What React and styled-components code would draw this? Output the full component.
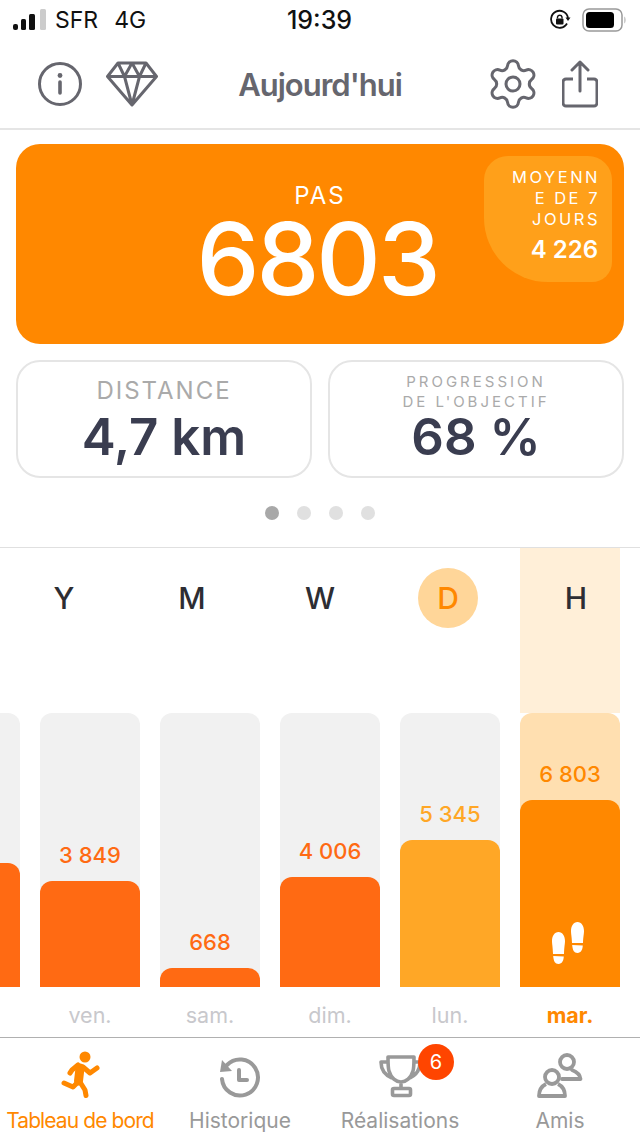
import React from 'react'
import styled, { createGlobalStyle } from 'styled-components'
import { Settings } from 'lucide-react'

const bars = [
  { day: 'ven.', value: '3 849', height: 106, color: '#ff6a13' },
  { day: 'sam.', value: '668', height: 19, color: '#ff6a13' },
  { day: 'dim.', value: '4 006', height: 110, color: '#ff6a13' },
  { day: 'lun.', value: '5 345', height: 147, color: '#ffa726' },
  { day: 'mar.', value: '6 803', height: 187, color: '#ff8800', today: true },
]

export default function App() {
  return (
    <>
      <GlobalStyle />
      <Page>
        <StatusBar>
          <StatusGroup>
            <svg width="34" height="22" viewBox="0 0 34 22">
              <rect x="0" y="15" width="5" height="6" rx="2" fill="#111" />
              <rect x="8" y="10" width="5" height="11" rx="1.5" fill="#111" />
              <rect x="16" y="5" width="6" height="16" rx="1.5" fill="#111" />
              <rect x="27" y="0" width="6" height="21" rx="1.5" fill="#ccc" />
            </svg>
            <Carrier>SFR</Carrier>
            <Carrier>4G</Carrier>
          </StatusGroup>
          <Clock>19:39</Clock>
          <StatusRight>
            <svg width="22" height="22" viewBox="0 0 22 22">
              <path d="M18 14.5A8.5 8.5 0 1 1 19 9" fill="none" stroke="#111" strokeWidth="1.8" />
              <path d="M16.5 8.5h5L19 12z" fill="#111" />
              <rect x="7" y="9.5" width="7.5" height="6" rx="1" fill="#111" />
              <path d="M8.5 9.5V8a2.3 2.3 0 0 1 4.5 0v1.5" fill="none" stroke="#111" strokeWidth="1.4" />
            </svg>
            <svg width="44" height="24" viewBox="0 0 44 24">
              <rect x="1" y="1" width="39" height="22" rx="6" fill="none" stroke="#999" strokeWidth="1.5" />
              <rect x="4" y="4" width="28" height="16" rx="3.5" fill="#000" />
              <path d="M42.5 8.5c1.2.6 1.2 6.4 0 7z" fill="#999" />
            </svg>
          </StatusRight>
        </StatusBar>

        <NavBar>
          <NavSide>
            <svg width="44" height="44" viewBox="0 0 44 44">
              <circle cx="22" cy="22" r="20.5" fill="none" stroke="#66666e" strokeWidth="3" />
              <circle cx="22" cy="13.5" r="2.4" fill="#66666e" />
              <path d="M22 20v11" stroke="#66666e" strokeWidth="3.6" strokeLinecap="round" />
            </svg>
            <svg width="52" height="46" viewBox="0 0 52 46">
              <path
                d="M12 2h28l10.5 13.5L26 44 1.5 15.5zM1.5 15.5h49M12 2l6.5 13.5L26 2l7.5 13.5L40 2M18.5 15.5 26 44l7.5-28.5"
                fill="none"
                stroke="#66666e"
                strokeWidth="3"
                strokeLinejoin="round"
              />
            </svg>
          </NavSide>
          <Title>Aujourd'hui</Title>
          <NavActions>
            <Settings size={56} color="#66666e" strokeWidth={1.3} />
            <svg width="36" height="48" viewBox="0 0 36 48">
              <path
                d="M11 19H4a3 3 0 0 0-3 3v21a3 3 0 0 0 3 3h28a3 3 0 0 0 3-3V22a3 3 0 0 0-3-3h-7"
                fill="none"
                stroke="#66666e"
                strokeWidth="3"
              />
              <path
                d="M18 31V2M10 10l8-8 8 8"
                fill="none"
                stroke="#66666e"
                strokeWidth="3"
                strokeLinecap="round"
                strokeLinejoin="round"
              />
            </svg>
          </NavActions>
        </NavBar>

        <Summary>
          <StepsCard>
            <StepsLabel>PAS</StepsLabel>
            <StepsValue>6803</StepsValue>
            <AverageBadge>
              <AverageLabel>
                MOYENN
                <br />E DE 7
                <br />
                JOURS
              </AverageLabel>
              <AverageValue>4 226</AverageValue>
            </AverageBadge>
          </StepsCard>
          <StatRow>
            <StatCard>
              <StatLabel>DISTANCE</StatLabel>
              <StatValue $gap={10}>4,7 km</StatValue>
            </StatCard>
            <StatCard $dense>
              <StatLabelSmall>
                PROGRESSION
                <br />
                DE L'OBJECTIF
              </StatLabelSmall>
              <StatValue $gap={2}>68 %</StatValue>
            </StatCard>
          </StatRow>
          <Dots>
            <Dot $active />
            <Dot />
            <Dot />
            <Dot />
          </Dots>
        </Summary>

        <RangeRow>
          {['Y', 'M', 'W', 'D', 'H'].map((letter) => (
            <RangeItem key={letter} $selected={letter === 'D'}>
              {letter}
            </RangeItem>
          ))}
        </RangeRow>

        <Chart>
          <Column>
            <Track>
              <Fill $color="#ff6a13" $height={124} />
            </Track>
          </Column>
          {bars.map((bar) => (
            <Column key={bar.day}>
              <Track $today={bar.today}>
                <BarValue $color={bar.color}>{bar.value}</BarValue>
                <Fill $color={bar.color} $height={bar.height}>
                  {bar.today && (
                    <Steps width="32" height="42" viewBox="0 0 32 42">
                      <path d="M6.5 10C10.5 10 13 14 13 19c0 3-.8 5.5-1 13H1c-.2-7.5-1-10-1-13 0-5 2.500-9 6.500-9z" fill="#fff" />
                      <path d="M1.200 34l10.600.6C11.500 39 10 42 6.500 42 3 42 1.500 39 1.200 34z" fill="#fff" />
                      <path d="M25.500 0C29.500 0 32 4 32 9c0 3-.8 5.500-1 12H20c-.2-6.500-1-9-1-12 0-5 2.500-9 6.500-9z" fill="#fff" />
                      <path d="M20.200 23l10.600.6C30.500 28 29 31 25.500 31 22 31 20.500 28 20.200 23z" fill="#fff" />
                    </Steps>
                  )}
                </Fill>
              </Track>
              <DayLabel $today={bar.today}>{bar.day}</DayLabel>
            </Column>
          ))}
        </Chart>

        <TabBar>
          <Tab $active>
            <TabIcon>
              <svg width="40" height="50" viewBox="0 0 40 50">
                <circle cx="25" cy="9" r="5.5" fill="#ff8800" />
                <path d="M20 20 18.500 33" fill="none" stroke="#ff8800" strokeWidth="9" strokeLinecap="round" />
                <path
                  d="M23 19l7 6 7-5M18 17l-6 5-2 3M18 34l-5 5-9-4M20 34l5 8 1 5.500"
                  fill="none"
                  stroke="#ff8800"
                  strokeWidth="5"
                  strokeLinecap="round"
                  strokeLinejoin="round"
                />
              </svg>
            </TabIcon>
            <TabLabel $active>Tableau de bord</TabLabel>
          </Tab>
          <Tab>
            <TabIcon>
              <svg width="42" height="42" viewBox="0 0 42 42">
                <path
                  d="M8 9A18 18 0 1 1 3 23"
                  fill="none"
                  stroke="#999"
                  strokeWidth="4"
                  strokeLinecap="round"
                />
                <path d="M3 4 1 16l12-1z" fill="#999" />
                <path d="M20 14v10h8" fill="none" stroke="#999" strokeWidth="4" strokeLinecap="round" strokeLinejoin="round" />
              </svg>
            </TabIcon>
            <TabLabel>Historique</TabLabel>
          </Tab>
          <Tab>
            <TabIcon>
              <svg width="42" height="44" viewBox="0 0 42 44">
                <path
                  d="M9 3h26c0 6 0 11-1 14-2 7-7 11-12 11s-10-4-12-11c-1-3-1-8-1-14zM9 8H2c0 7 4 13 11 16M35 8h6c0 7-4 13-10 16M22 28v6"
                  fill="none"
                  stroke="#999"
                  strokeWidth="3.6"
                  strokeLinejoin="round"
                />
                <rect x="13.5" y="34.5" width="18" height="7" rx="1.5" fill="none" stroke="#999" strokeWidth="3.6" />
              </svg>
              <TabBadge>6</TabBadge>
            </TabIcon>
            <TabLabel>Réalisations</TabLabel>
          </Tab>
          <Tab>
            <TabIcon>
              <svg width="46" height="46" viewBox="0 0 46 46">
                <circle cx="30" cy="10" r="7" fill="none" stroke="#999" strokeWidth="3.8" />
                <path d="M35 18c4 1.500 8 4 8.500 9H25" fill="none" stroke="#999" strokeWidth="3.8" strokeLinecap="round" strokeLinejoin="round" />
                <circle cx="15" cy="25" r="7" fill="none" stroke="#999" strokeWidth="3.8" />
                <path d="M9 32c-4 2-7 6-7 12h26c0-6-3-10-7-12" fill="none" stroke="#999" strokeWidth="3.8" strokeLinejoin="round" />
              </svg>
            </TabIcon>
            <TabLabel>Amis</TabLabel>
          </Tab>
        </TabBar>
      </Page>
    </>
  )
}

const GlobalStyle = createGlobalStyle`
  html, body {
    margin: 0;
    padding: 0;
    background: #fff;
  }
  body {
    font-family: Inter, "Liberation Sans", sans-serif;
  }
`

const Page = styled.div`
  width: 640px;
  height: 1136px;
  display: flex;
  flex-direction: column;
  overflow: hidden;
  background: #fff;
`

const StatusBar = styled.div`
  height: 40px;
  padding: 0 14px 0 13px;
  display: grid;
  grid-template-columns: 1fr auto 1fr;
  align-items: center;
  color: #111;
`

const StatusGroup = styled.div`
  display: flex;
  align-items: center;
  gap: 8px;
`

const StatusRight = styled.div`
  display: flex;
  align-items: center;
  justify-content: flex-end;
  gap: 11px;
`

const Carrier = styled.span`
  font-size: 23px;
  margin-right: 8px;
`

const Clock = styled.span`
  font-size: 25px;
  font-weight: 500;
`

const NavBar = styled.div`
  height: 88px;
  padding: 0 42px 0 38px;
  display: grid;
  grid-template-columns: 1fr auto 1fr;
  align-items: center;
  border-bottom: 2px solid #e5e5e5;
`

const NavSide = styled.div`
  display: flex;
  align-items: center;
  gap: 24px;
`

const NavActions = styled.div`
  display: flex;
  align-items: center;
  justify-content: flex-end;
  gap: 21px;
`

const Title = styled.h1`
  margin: 0 0 0 4px;
  font-size: 31px;
  font-weight: 600;
  letter-spacing: -1px;
  color: #66666e;
`

const Summary = styled.div`
  padding: 14px 16px 27px;
  display: flex;
  flex-direction: column;
  gap: 16px;
  border-bottom: 1px solid #e0e0e0;
`

const StepsCard = styled.div`
  position: relative;
  height: 200px;
  border-radius: 24px;
  background: #ff8800;
  color: #fff;
  display: flex;
  flex-direction: column;
  align-items: center;
`

const StepsLabel = styled.div`
  margin-top: 39px;
  font-size: 24px;
  line-height: 26px;
  letter-spacing: 2px;
`

const StepsValue = styled.div`
  font-size: 100px;
  line-height: 80px;
  margin: 10px 6px 0 0;
  font-weight: 500;
  letter-spacing: -3px;
`

const AverageBadge = styled.div`
  position: absolute;
  top: 12px;
  right: 12px;
  width: 128px;
  height: 126px;
  box-sizing: border-box;
  padding: 11px 14px 0 0;
  border-radius: 24px 24px 20px 64px;
  background: #ffa01a;
  text-align: right;
`

const AverageLabel = styled.div`
  margin-right: -2px;
  font-size: 16.5px;
  line-height: 21px;
  letter-spacing: 2.5px;
`

const AverageValue = styled.div`
  margin-top: 6px;
  font-size: 24px;
  line-height: 28px;
  font-weight: 600;
`

const StatRow = styled.div`
  display: grid;
  grid-template-columns: 1fr 1fr;
  gap: 16px;
`

const StatCard = styled.div`
  height: 118px;
  box-sizing: border-box;
  padding-top: ${(p) => (p.$dense ? 10 : 16)}px;
  border: 2px solid #e5e5e5;
  border-radius: 24px;
  display: flex;
  flex-direction: column;
  align-items: center;
  text-align: center;
`

const StatLabel = styled.div`
  font-size: 24px;
  line-height: 26px;
  letter-spacing: 2px;
  color: #aaa;
`

const StatLabelSmall = styled.div`
  font-size: 15px;
  line-height: 20px;
  letter-spacing: 3px;
  color: #aaa;
`

const StatValue = styled.div`
  margin-top: ${(p) => p.$gap}px;
  font-size: 51px;
  line-height: 46px;
  font-weight: 600;
  color: #3a3d50;
`

const Dots = styled.div`
  margin-top: 12px;
  display: flex;
  justify-content: center;
  gap: 18px;
`

const Dot = styled.span`
  width: 14px;
  height: 14px;
  border-radius: 50%;
  background: ${(p) => (p.$active ? '#a8a8a8' : '#e0e0e0')};
`

const RangeRow = styled.div`
  position: relative;
  height: 165px;
  flex: none;
  display: grid;
  grid-template-columns: repeat(5, 128px);
  align-items: start;
  justify-items: center;
  padding-top: 20px;
  box-sizing: border-box;

  &::before {
    content: '';
    position: absolute;
    top: 0;
    bottom: 0;
    left: 520px;
    width: 100px;
    background: #ffefd8;
  }
`

const RangeItem = styled.div`
  position: relative;
  width: 60px;
  height: 60px;
  border-radius: 50%;
  display: flex;
  align-items: center;
  justify-content: center;
  font-size: 30px;
  font-weight: 500;
  color: ${(p) => (p.$selected ? '#ff8800' : '#2d2d33')};
  background: ${(p) => (p.$selected ? '#ffd699' : 'transparent')};
`

const Chart = styled.div`
  flex: none;
  display: flex;
  gap: 20px;
  margin-left: -80px;
`

const Column = styled.div`
  width: 100px;
  flex: none;
  display: flex;
  flex-direction: column;
`

const Track = styled.div`
  height: 274px;
  display: flex;
  flex-direction: column;
  justify-content: flex-end;
  align-items: stretch;
  border-radius: 12px 12px 0 0;
  background: ${(p) => (p.$today ? '#ffdfb0' : '#f1f1f1')};
`

const BarValue = styled.div`
  margin-bottom: 12px;
  text-align: center;
  font-size: 22px;
  line-height: 28px;
  font-weight: 500;
  color: ${(p) => p.$color};
`

const Fill = styled.div`
  position: relative;
  height: ${(p) => p.$height}px;
  border-radius: 12px 12px 0 0;
  background: ${(p) => p.$color};
`

const Steps = styled.svg`
  position: absolute;
  left: 32px;
  bottom: 23px;
`

const DayLabel = styled.div`
  height: 50px;
  line-height: 56px;
  text-align: center;
  font-size: 21.5px;
  font-weight: ${(p) => (p.$today ? 700 : 400)};
  color: ${(p) => (p.$today ? '#ff8800' : '#c8c8cc')};
`

const TabBar = styled.div`
  flex: 1;
  display: grid;
  grid-template-columns: repeat(4, 160px);
  border-top: 1px solid #b0b0b0;
`

const Tab = styled.div`
  display: flex;
  flex-direction: column;
  align-items: center;
  justify-content: flex-end;
  padding-bottom: 2px;
`

const TabLabel = styled.span`
  font-size: 21px;
  line-height: 26px;
  white-space: nowrap;
  letter-spacing: ${(p) => (p.$active ? '-0.9px' : '0')};
  color: ${(p) => (p.$active ? '#ff8800' : '#999')};
`

const TabIcon = styled.div`
  position: relative;
  height: 50px;
  margin-bottom: 10px;
  display: flex;
  align-items: flex-end;
`

const TabBadge = styled.span`
  position: absolute;
  top: -4px;
  left: 39px;
  width: 36px;
  height: 36px;
  border-radius: 50%;
  background: #ff4500;
  color: #fff;
  font-size: 20px;
  display: flex;
  align-items: center;
  justify-content: center;
`
